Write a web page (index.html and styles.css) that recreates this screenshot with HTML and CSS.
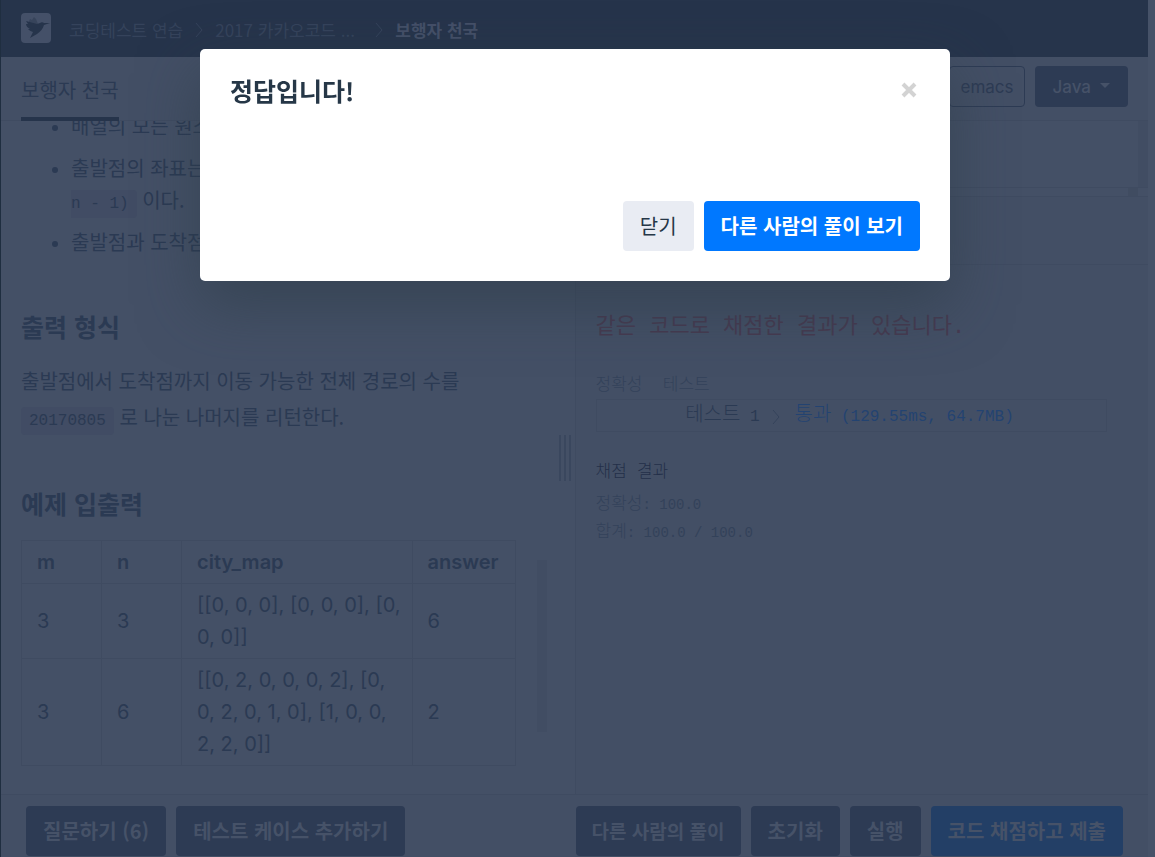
FILE: index.html
```html
<!doctype html>
<html lang="ko">
  <head>
    <meta charset="utf-8" />
    <meta name="viewport" content="width=device-width, initial-scale=1" />
    <title>보행자 천국</title>
    <link rel="stylesheet" href="styles.css">
  </head>

  <body>
    <div class="page">
      <header class="navbar">
        <a href="#" class="logo" aria-label="Home">
          <svg width="30" height="30" viewBox="0 0 30 30">
            <rect width="30" height="30" rx="4" fill="#445068" />
            <path d="M8 8l1-2 2 1 2-3 2 2 2 5-1 2-8-1z" fill="#37445b" />
            <path
              d="M5 8l11 3c1 0 2-1 3-1 1-1 3-1 4 0l6 0-6 2c-1 4-4 7-7 9l-7 4 3-6c-3-1-4-2-5-3l2 0c-2-1-4-3-4-5l2 0z"
              fill="#26344b"
            />
          </svg>
        </a>
        <nav class="breadcrumb">
          <a href="#">코딩테스트 연습</a>
          <svg class="chevron" width="8" height="16" viewBox="0 0 8 16">
            <path d="M1 1l6 7-6 7" />
          </svg>
          <a href="#" class="crumb-wide">2017 카카오코드 ...</a>
          <svg class="chevron" width="8" height="16" viewBox="0 0 8 16">
            <path d="M1 1l6 7-6 7" />
          </svg>
          <strong>보행자 천국</strong>
        </nav>
      </header>

      <div class="toolbar">
        <a href="#" class="tab">보행자 천국</a>
        <div class="editor-options">
          <button type="button" class="small-button outline">emacs</button>
          <button type="button" class="small-button dark">
            Java <span class="caret"></span>
          </button>
        </div>
      </div>

      <main class="main">
        <section class="description">
          <div class="guide">
            <ul>
              <li>배열의 모든 원소</li>
              <li>출발점의 좌표는<br /><code class="code-rest">n - 1)</code> 이다.</li>
              <li>출발점과 도착점</li>
            </ul>
            <h2>출력 형식</h2>
            <p>
              출발점에서 도착점까지 이동 가능한 전체 경로의 수를
              <code>20170805</code> 로 나눈 나머지를 리턴한다.
            </p>
            <h2>예제 입출력</h2>
            <table>
              <thead>
                <tr>
                  <th class="col-size">m</th>
                  <th class="col-size">n</th>
                  <th>city_map</th>
                  <th class="col-answer">answer</th>
                </tr>
              </thead>
              <tbody>
                <tr>
                  <td>3</td>
                  <td>3</td>
                  <td>[[0, 0, 0], [0, 0, 0], [0, 0, 0]]</td>
                  <td>6</td>
                </tr>
                <tr>
                  <td>3</td>
                  <td>6</td>
                  <td>[[0, 2, 0, 0, 0, 2], [0, 0, 2, 0, 1, 0], [1, 0, 0, 2, 2, 0]]</td>
                  <td>2</td>
                </tr>
              </tbody>
            </table>
          </div>
          <div class="scroll-thumb"></div>
          <div class="gutter"></div>
        </section>

        <section class="run">
          <div class="editor"><div class="editor-scroll"></div></div>
          <div class="editor-bottom"><div class="editor-corner"></div></div>
          <div class="run-title"></div>
          <div class="console">
            <p class="notice">같은 코드로 채점한 결과가 있습니다.</p>
            <h3 class="muted">정확성&nbsp; 테스트</h3>
            <div class="result">
              <span class="result-name">테스트<span class="num"> 1</span></span>
              <svg class="result-chevron" width="8" height="16" viewBox="0 0 8 16">
                <path d="M1 1l6 7-6 7" />
              </svg>
              <span class="passed">통과<span class="num"> (129.55ms, 64.7MB)</span></span>
            </div>
            <h3>채점 결과</h3>
            <div class="score">정확성<span>: 100.0</span></div>
            <div class="score">합계<span>: 100.0 / 100.0</span></div>
          </div>
        </section>
      </main>

      <footer class="footer">
        <div class="button-group">
          <button type="button" class="button dark">질문하기 (6)</button>
          <button type="button" class="button dark">테스트 케이스 추가하기</button>
        </div>
        <div class="button-group">
          <button type="button" class="button dark solutions">다른 사람의 풀이</button>
          <button type="button" class="button dark">초기화</button>
          <button type="button" class="button dark">실행</button>
          <button type="button" class="button submit">코드 채점하고 제출</button>
        </div>
      </footer>
    </div>

    <div class="modal-wrap">
      <div class="modal" role="dialog" aria-modal="true" aria-labelledby="modal-title">
        <div class="modal-header">
          <h1 id="modal-title">정답입니다!</h1>
          <button type="button" class="close" aria-label="닫기">
            <svg width="16" height="16" viewBox="0 0 16 16">
              <path d="M2 2l12 12M14 2L2 14" />
            </svg>
          </button>
        </div>
        <div class="modal-footer">
          <button type="button" class="button light">닫기</button>
          <button type="button" class="button primary">다른 사람의 풀이 보기</button>
        </div>
      </div>
    </div>
  </body>
</html>
```

FILE: styles.css
```css
:root {
  --page: #445066;
  --bar: #434f65;
  --navy: #26344b;
  --dark: #2d3b54;
  --text: #2b3a53;
  --muted: #33425a;
  --line: #3f4b61;
}

* {
  box-sizing: border-box;
}

body {
  background: var(--page);
  color: var(--text);
  font-family: "Noto Sans CJK KR", Inter, sans-serif;
  font-size: 20px;
  line-height: 32px;
  margin: 0;
}

a {
  color: inherit;
  text-decoration: none;
}

button {
  border: 0;
  border-radius: 4px;
  cursor: pointer;
  font-family: inherit;
}

h1,
h2,
h3,
p,
ul {
  margin: 0;
}

.page {
  border-left: 1px solid #1f2e40;
  border-right: 7px solid #465268;
  display: flex;
  flex-direction: column;
  height: 100vh;
  overflow: hidden;
}

.navbar {
  align-items: center;
  background: var(--navy);
  display: flex;
  flex: none;
  gap: 18px;
  height: 57px;
  padding: 0 20px 1px;
}

.logo svg {
  display: block;
}

.breadcrumb {
  align-items: center;
  color: #35435b;
  display: flex;
  font-size: 17px;
  gap: 12px;
  padding-top: 4px;
}

.breadcrumb strong {
  color: #445068;
  font-weight: 700;
}

.crumb-wide {
  width: 148px;
}

.chevron,
.result-chevron {
  fill: none;
  stroke: #35435b;
}

.toolbar {
  align-items: stretch;
  background: var(--bar);
  border-bottom: 1px solid var(--line);
  display: flex;
  flex: none;
  height: 64px;
  justify-content: space-between;
  padding: 0 20px;
}

.tab {
  border-bottom: 4px solid var(--navy);
  line-height: 66px;
  margin-bottom: -1px;
}

.editor-options {
  display: flex;
  gap: 10px;
  padding-top: 9px;
}

.small-button {
  align-items: center;
  display: flex;
  font-family: Inter, sans-serif;
  font-size: 17px;
  font-weight: 500;
  gap: 9px;
  height: 41px;
  padding: 0 18px;
}

.outline {
  background: transparent;
  border: 1px solid var(--dark);
  color: var(--dark);
  font-weight: 400;
  padding: 0 10px;
}

.dark {
  background: var(--dark);
  color: #465268;
}

.caret {
  border: 5px solid transparent;
  border-bottom: 0;
  border-top-color: currentColor;
  margin-bottom: 2px;
}

.main {
  display: flex;
  flex: 1;
  min-height: 0;
}

.description {
  border-right: 1px solid var(--line);
  display: flex;
  flex: none;
  overflow: hidden;
  width: calc(50% + 1px);
}

/* scrolled to the end of the problem text */
.guide {
  display: flex;
  flex: 1;
  flex-direction: column;
  justify-content: flex-end;
  padding: 0 21px 28px 20px;
}

.guide ul {
  padding-left: 50px;
}

.guide li {
  margin-bottom: 10px;
}

.guide li::marker {
  font-family: Inter, sans-serif;
}

.guide li:last-child {
  margin-bottom: 0;
}

.guide h2 {
  font-size: 25px;
  font-weight: 700;
  line-height: 34px;
  margin: 51px 0 20px;
}

.guide p {
  line-height: 36px;
}

code {
  background: #414c64;
  border-radius: 4px;
  font-family: "Liberation Mono", monospace;
  font-size: 16px;
  line-height: 16px;
  padding: 5px 8px;
}

.code-rest {
  border-radius: 0 4px 4px 0;
  padding-left: 0;
}

table {
  border-collapse: collapse;
  font-family: Inter, sans-serif;
  table-layout: fixed;
  width: 100%;
}

th,
td {
  border: 1px solid var(--line);
  padding: 5px 10px 5px 15px;
  text-align: left;
}

th {
  font-weight: 600;
}

.col-size {
  width: 80px;
}

.col-answer {
  width: 103px;
}

.scroll-thumb {
  align-self: flex-end;
  background: #414d63;
  height: 172px;
  margin-bottom: 62px;
  width: 10px;
}

.gutter {
  align-self: center;
  background: repeating-linear-gradient(to right, #3a475e 0 2px, transparent 2px 5px);
  height: 46px;
  margin: 0 4px 0 12px;
  width: 12px;
}

.run {
  background: var(--bar);
  display: flex;
  flex: 1;
  flex-direction: column;
}

.editor {
  background: var(--page);
  border-bottom: 1px solid var(--line);
  display: flex;
  height: 67px;
  justify-content: flex-end;
}

.editor-scroll {
  background: #414d63;
  width: 10px;
}

.editor-bottom {
  background: var(--page);
  border-bottom: 1px solid var(--line);
  display: flex;
  height: 9px;
  justify-content: flex-end;
  padding-right: 10px;
}

.editor-corner {
  background: #404c61;
  width: 10px;
}

.run-title {
  border-bottom: 1px solid var(--line);
  height: 68px;
}

.console {
  font-family: "Liberation Mono", "Noto Sans CJK KR", monospace;
  font-size: 17px;
  font-weight: 300;
  line-height: 27px;
  padding: 47px 41px 0 20px;
}

.notice {
  color: #463a50;
  font-size: 22px;
  font-weight: 400;
  line-height: 32px;
  margin-bottom: 28px;
}

.console h3 {
  color: #232f49;
  font-size: 17px;
  font-weight: 300;
  line-height: 27px;
  margin-bottom: 5px;
}

.console .muted {
  color: var(--muted);
  margin-bottom: 0;
}

.result {
  align-items: center;
  border: 1px solid var(--line);
  display: flex;
  font-size: 20px;
  gap: 12px;
  line-height: 28px;
  margin-bottom: 27px;
  padding-top: 2px;
}

.result-name {
  flex: none;
  text-align: right;
  width: 32%;
}

.passed {
  color: #234371;
  margin-left: 3px;
}

.num {
  font-size: 16px;
}

.score {
  color: var(--muted);
}

.score span {
  font-size: 14px;
}

.footer {
  background: var(--bar);
  border-top: 1px solid var(--line);
  display: flex;
  flex: none;
  height: 63px;
  justify-content: space-between;
  padding: 11px 25px 0;
}

.button-group {
  display: flex;
  gap: 10px;
}

.button {
  font-size: 20px;
  font-weight: 700;
  height: 50px;
  line-height: 32px;
  padding: 0 17px;
  white-space: nowrap;
}

.solutions {
  font-size: 19px;
  padding: 0 16px;
}

.submit {
  background: #233f66;
  color: #465268;
}

.modal-wrap {
  align-items: flex-start;
  display: flex;
  inset: 0 5px 0 0;
  justify-content: center;
  padding-top: 49px;
  position: fixed;
}

.modal {
  background: #fff;
  border-radius: 5px;
  box-shadow: 0 24px 60px rgba(45, 60, 72, 0.6);
  max-width: 750px;
  padding: 24px 30px 30px;
  width: 100%;
}

.modal-header {
  align-items: center;
  display: flex;
  justify-content: space-between;
  margin-bottom: 94px;
}

.modal-header h1 {
  color: #263747;
  font-size: 25px;
  font-weight: 700;
  line-height: 34px;
}

.close {
  background: transparent;
  display: flex;
  padding: 5px 3px;
}

.close path {
  stroke: #d3d3d3;
  stroke-width: 4;
}

.modal-footer {
  display: flex;
  gap: 10px;
  justify-content: flex-end;
}

.light {
  background: #e9ecf3;
  color: #263747;
  font-weight: 400;
}

.primary {
  background: #0078ff;
  color: #fff;
}
```
